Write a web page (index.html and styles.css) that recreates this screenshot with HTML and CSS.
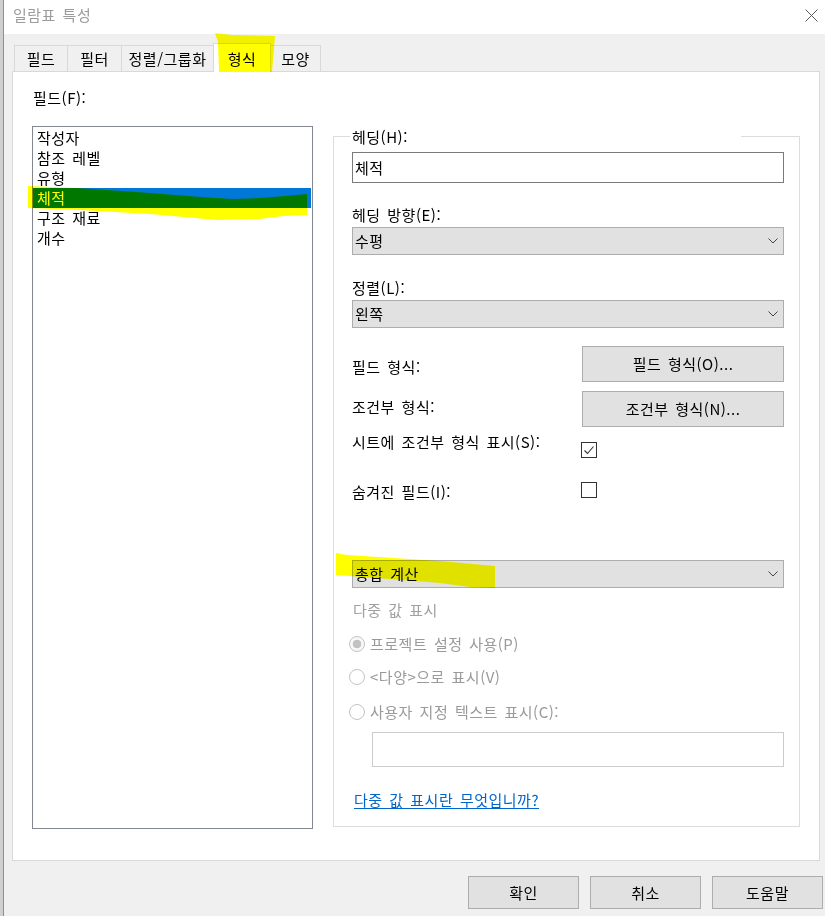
FILE: index.html
```
<!DOCTYPE html>
<html lang="ko">
<head>
<meta charset="utf-8">
<title>일람표 특성</title>
<link rel="stylesheet" href="styles.css">
</head>
<body>
<div class="screen">
  <div class="behind"></div>
  <div class="dialog">
    <header class="titlebar">
      <span class="title">일람표 특성</span>
      <svg class="close" width="13" height="13" viewBox="0 0 13 13"><path d="M0.5 0.5 L12.5 12.5 M12.5 0.5 L0.5 12.5" stroke="#5a5a5a" stroke-width="1" fill="none"/></svg>
    </header>

    <nav class="tabs">
      <div class="tab tab-fields">필드</div>
      <div class="tab tab-filter">필터</div>
      <div class="tab tab-sort">정렬/그룹화</div>
      <div class="tab tab-format tab-current">형식</div>
      <div class="tab tab-look">모양</div>
    </nav>

    <main class="panel">
      <section class="fields-col">
        <div class="field-label">필드(F):</div>
        <ul class="listbox">
          <li>작성자</li>
          <li>참조 레벨</li>
          <li>유형</li>
          <li class="selected">체적</li>
          <li>구조 재료</li>
          <li>개수</li>
        </ul>
      </section>

      <fieldset class="group">
        <legend class="group-title">헤딩(H):</legend>
        <div class="textbox">체적</div>

        <div class="caption cap-orient">헤딩 방향(E):</div>
        <div class="combo combo-tight">
          <span>수평</span>
          <svg class="chev" width="10" height="6" viewBox="0 0 10 6"><path d="M0.5 0.5 L5 5 L9.5 0.5" stroke="#444" stroke-width="1" fill="none"/></svg>
        </div>

        <div class="caption cap-align">정렬(L):</div>
        <div class="combo combo-tight">
          <span>왼쪽</span>
          <svg class="chev" width="10" height="6" viewBox="0 0 10 6"><path d="M0.5 0.5 L5 5 L9.5 0.5" stroke="#444" stroke-width="1" fill="none"/></svg>
        </div>

        <div class="row row-field">
          <span class="row-label lbl-low">필드 형식:</span>
          <div class="btn btn-tall">필드 형식(O)...</div>
        </div>

        <div class="row row-cond">
          <span class="row-label lbl-high">조건부 형식:</span>
          <div class="btn btn-tall">조건부 형식(N)...</div>
        </div>

        <div class="row row-check row-sheet">
          <span class="row-label">시트에 조건부 형식 표시(S):</span>
          <div class="check check-low">
            <svg width="14" height="14" viewBox="0 0 14 14"><path d="M2.5 7.5 L5.5 10.5 L11.5 3.5" stroke="#333" stroke-width="1.1" fill="none"/></svg>
          </div>
        </div>

        <div class="row row-check row-hidden">
          <span class="row-label">숨겨진 필드(I):</span>
          <div class="check"></div>
        </div>

        <div class="combo combo-total">
          <span>총합 계산</span>
          <svg class="chev" width="10" height="6" viewBox="0 0 10 6"><path d="M0.5 0.5 L5 5 L9.5 0.5" stroke="#444" stroke-width="1" fill="none"/></svg>
        </div>

        <div class="caption disabled cap-multi">다중 값 표시</div>

        <div class="radio-row rr-1"><span class="radio on"></span><span>프로젝트 설정 사용(P)</span></div>
        <div class="radio-row rr-2"><span class="radio"></span><span>&lt;다양&gt;으로 표시(V)</span></div>
        <div class="radio-row rr-3"><span class="radio"></span><span>사용자 지정 텍스트 표시(C):</span></div>

        <div class="disabled-box"></div>

        <a class="help-link" href="#">다중 값 표시란 무엇입니까?</a>
      </fieldset>
    </main>

    <footer class="actions">
      <div class="btn btn-action">확인</div>
      <div class="btn btn-action">취소</div>
      <div class="btn btn-action">도움말</div>
    </footer>
  </div>
</div>

<svg class="highlighter" width="825" height="916" viewBox="0 0 825 916">
  <polygon points="215,33 232,35 275,36 272,72 219,72 218,42" fill="#ffff00"/>
  <polygon points="28,186 77,188 150,193 200,197 233,199 260,198 285,196 307,194 307,215 283,216 260,219 217,220 150,214 80,210 28,208" fill="#ffff00"/>
  <polygon points="336,553 347,555 440,561 495,566 495,588 470,587 440,583 350,576 336,575" fill="#ffff00"/>
</svg>
</body>
</html>
```

FILE: styles.css
```
* {
  box-sizing: border-box;
}

html,
body {
  margin: 0;
  padding: 0;
}

body {
  position: relative;
  width: 825px;
  height: 916px;
  overflow: hidden;
  background: #f0f0f0;
  font-family: "Noto Sans CJK KR", "Noto Sans", sans-serif;
  font-size: 15px;
  line-height: 20px;
  letter-spacing: 0.5px;
  word-spacing: 2px;
  color: #000;
}

.screen {
  display: flex;
  height: 916px;
}

.behind {
  width: 3px;
  flex: none;
  background: #cfcfcf;
}

.dialog {
  flex: 1;
  min-width: 0;
  display: flex;
  flex-direction: column;
  border-left: 1px solid #8e8e8e;
}

/* title bar */
.titlebar {
  flex: none;
  height: 34px;
  background: #fff;
  display: flex;
  align-items: center;
  justify-content: space-between;
  padding: 0 7px 4px 9px;
}

.title {
  color: #9b9b9b;
}

.close {
  display: block;
}

/* tabs */
.tabs {
  flex: none;
  z-index: 1;
  display: flex;
  align-items: flex-end;
  height: 27px;
  margin: 11px 0 -1px;
  padding-left: 10px;
}

.tab {
  height: 27px;
  margin-left: -1px;
  border: 1px solid #d9d9d9;
  background: #f0f0f0;
  display: flex;
  align-items: center;
  justify-content: center;
}

.tab:first-child {
  margin-left: 0;
}

.tab-fields { width: 54px; }
.tab-filter { width: 55px; }
.tab-sort { width: 93px; }
.tab-format { width: 58px; }
.tab-look { width: 51px; }

.tab-current {
  height: 29px;
  z-index: 2;
  background: #fff;
  border-bottom: none;
  padding-top: 2px;
}

/* panel */
.panel {
  flex: none;
  height: 790px;
  margin: 0 5px 0 8px;
  background: #fff;
  border: 1px solid #d9d9d9;
  display: flex;
  align-items: flex-start;
  gap: 20px;
  padding: 16px 0 0 19px;
}

.fields-col {
  width: 281px;
  flex: none;
  display: flex;
  flex-direction: column;
}

.field-label {
  padding-left: 1px;
  margin-bottom: 18px;
}

.listbox {
  list-style: none;
  margin: 0;
  height: 703px;
  border: 1px solid #828790;
  padding: 1px 1px 0 0;
}

.listbox li {
  height: 20px;
  line-height: 20px;
  padding-left: 4px;
}

.listbox .selected {
  background: #0078d7;
  color: #fff;
}

/* group box */
.group {
  flex: none;
  width: 467px;
  min-width: 0;
  margin: 36px 0 0;
  border: 1px solid #dcdcdc;
  padding: 0 15px 16px 18px;
}

.group-title {
  width: 391px;
  height: 24px;
  margin-left: -2px;
  padding: 3px 0 0 2px;
  line-height: 20px;
}

.textbox {
  height: 31px;
  margin-top: 4px;
  border: 1px solid #7a7a7a;
  background: #fff;
  padding-left: 2px;
  line-height: 29px;
}

.caption {
  line-height: 20px;
}

.cap-orient { margin-top: 22px; }
.cap-align { margin-top: 23px; }

.combo {
  height: 28px;
  background: #e1e1e1;
  border: 1px solid #adadad;
  display: flex;
  align-items: center;
  justify-content: space-between;
  padding: 0 5px 0 2px;
}

.combo-tight { margin-top: 2px; }
.combo-total { margin-top: 58px; }

.chev {
  display: block;
}

.row {
  display: grid;
  grid-template-columns: 230px 202px;
  align-items: center;
}

.row-field { margin-top: 18px; }
.row-cond { margin-top: 9px; }

.lbl-low { padding-top: 5px; }
.lbl-high { padding-bottom: 5px; }

.row-check {
  align-items: start;
}

.row-sheet { margin-top: 5px; }
.row-hidden { margin-top: 24px; }

.btn {
  background: #e1e1e1;
  border: 1px solid #adadad;
  display: flex;
  align-items: center;
  justify-content: center;
}

.btn-tall {
  height: 36px;
}

.check {
  width: 16px;
  height: 16px;
  margin-left: -1px;
  border: 1px solid #333;
  background: #fff;
  display: flex;
  align-items: center;
  justify-content: center;
}

.check svg {
  display: block;
}

.check-low {
  margin-top: 10px;
}

.disabled {
  color: #a0a0a0;
}

.cap-multi {
  margin-top: 12px;
  padding-left: 1px;
}

.radio-row {
  display: flex;
  align-items: center;
  gap: 5px;
  height: 20px;
  margin-left: -3px;
  color: #9a9a9a;
}

.rr-1 { margin-top: 14px; }
.rr-2 { margin-top: 13px; }
.rr-3 { margin-top: 15px; }

.radio {
  width: 16px;
  height: 16px;
  flex: none;
  border-radius: 50%;
  border: 1px solid #c4c4c4;
  background: #fff;
}

.radio.on {
  background: radial-gradient(circle, #c2c2c2 0 4px, #f8f8f8 4.6px);
}

.disabled-box {
  height: 35px;
  margin: 10px 0 0 20px;
  border: 1px solid #cccccc;
  background: #fff;
}

.help-link {
  display: block;
  width: max-content;
  margin: 23px 0 0 2px;
  color: #0066cc;
  text-decoration: underline;
  text-underline-offset: 2px;
}

/* bottom buttons */
.actions {
  flex: none;
  display: flex;
  justify-content: flex-end;
  gap: 11px;
  padding: 15px 2px 0 0;
}

.btn-action {
  width: 111px;
  height: 33px;
}

/* highlighter marks drawn over the screenshot */
.highlighter {
  position: absolute;
  top: 0;
  left: 0;
  z-index: 10;
  pointer-events: none;
  mix-blend-mode: multiply;
}
```
